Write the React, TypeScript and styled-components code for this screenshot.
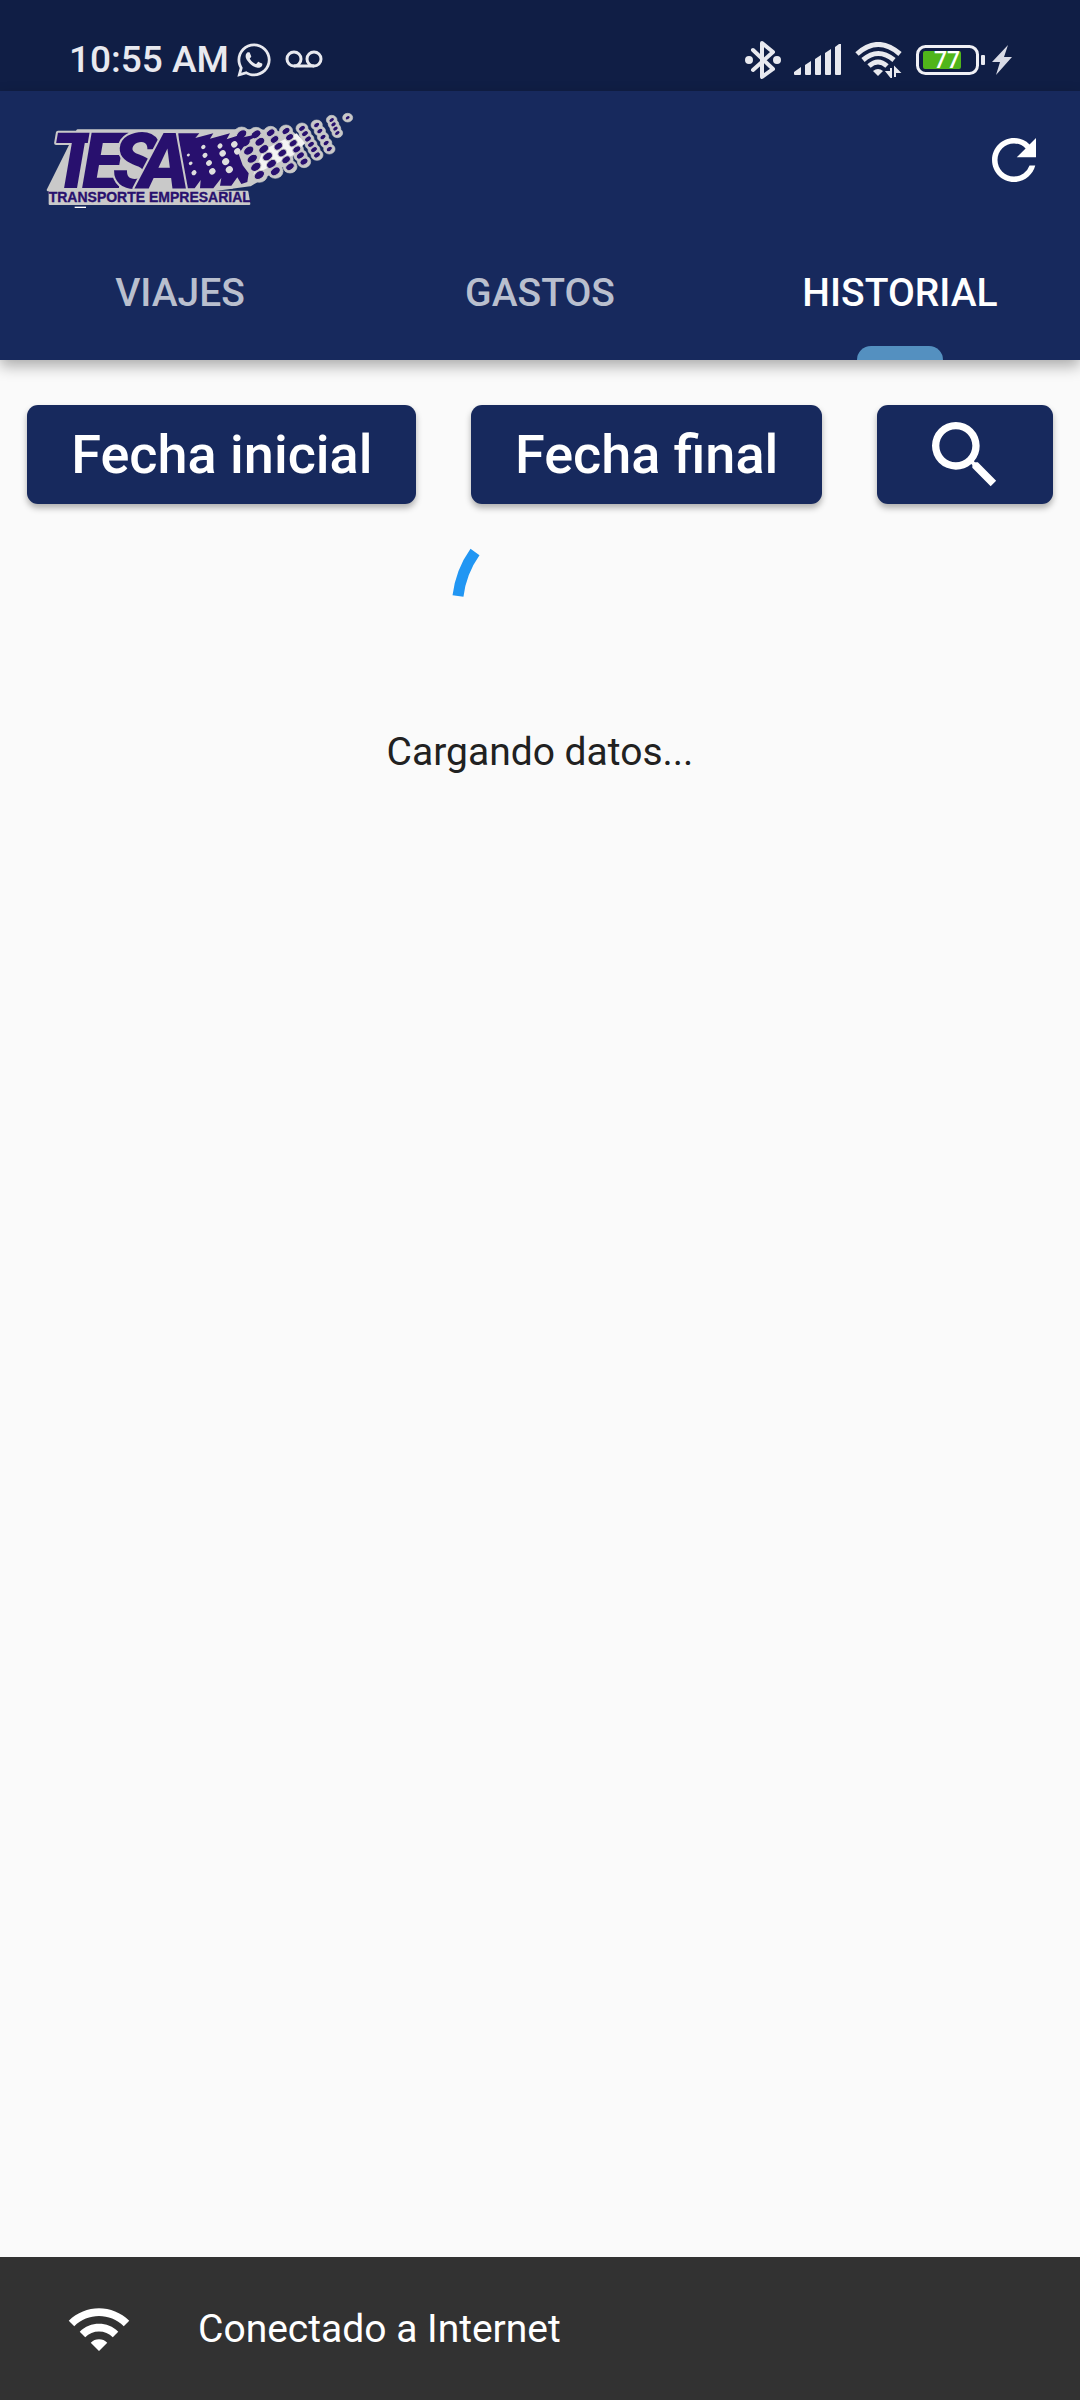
import React from 'react';
import styled, { createGlobalStyle } from 'styled-components';
import { MdRefresh, MdSearch, MdWifi } from 'react-icons/md';
import { FaWhatsapp } from 'react-icons/fa';

const navy = '#17295d';
const statusNavy = '#101e45';
const ink = '#28106e';
const silver = '#c9c9c9';

const GlobalStyle = createGlobalStyle`
  * { box-sizing: border-box; }
  body {
    margin: 0;
    background: #fafafa;
    font-family: Roboto, "Liberation Sans", sans-serif;
  }
  button { font-family: inherit; border: 0; padding: 0; cursor: pointer; }
  svg { display: block; flex: none; }
`;

const Screen = styled.div`
  min-height: 100vh;
  display: flex;
  flex-direction: column;
`;

const StatusBar = styled.div`
  height: 91px;
  padding: 28px 68px 0 69px;
  display: flex;
  align-items: center;
  justify-content: space-between;
  background: ${statusNavy};
  color: #e8e9ef;
`;

const StatusGroup = styled.div<{ $gap: number }>`
  display: flex;
  align-items: center;
  gap: ${(p) => p.$gap}px;
`;

const Clock = styled.span`
  font-size: 37px;
  line-height: 44px;
  font-weight: 500;
`;

const Header = styled.header`
  background: ${navy};
  box-shadow: 0 6px 14px rgba(0, 0, 0, 0.32);
`;

const Toolbar = styled.div`
  height: 137px;
  padding: 0 33px 0 44px;
  display: flex;
  align-items: center;
  justify-content: space-between;
`;

const IconButton = styled.button`
  display: flex;
  background: none;
  color: #fff;
`;

const Tabs = styled.div`
  display: grid;
  grid-template-columns: repeat(3, 1fr);
`;

const Tab = styled.button<{ $active: boolean }>`
  height: 132px;
  display: grid;
  grid-template-rows: 12px 1fr 14px;
  align-items: center;
  justify-items: center;
  background: none;
  color: ${(p) => (p.$active ? '#fff' : '#b9bfce')};
  font-size: 39px;
  line-height: 44px;
  font-weight: 500;

  &::before { content: ''; }

  &::after {
    content: '';
    width: 86px;
    height: 14px;
    border-radius: 14px 14px 0 0;
    background: ${(p) => (p.$active ? '#5490c0' : 'transparent')};
  }
`;

const Main = styled.main`
  flex: 1;
  display: flex;
  flex-direction: column;
  align-items: center;
`;

const Filters = styled.div`
  align-self: stretch;
  margin-top: 45px;
  display: flex;
  justify-content: space-around;
`;

const FilterButton = styled.button`
  height: 99px;
  padding: 0 44px;
  display: flex;
  align-items: center;
  border-radius: 11px;
  background: ${navy};
  color: #fff;
  font-size: 54px;
  line-height: 64px;
  font-weight: 500;
  box-shadow: 0 4px 6px rgba(0, 0, 0, 0.3);
`;

const Spinner = styled.svg`
  margin-top: 28px;
`;

const LoadingText = styled.p`
  margin: 22px 0 0;
  color: #212121;
  font-size: 39px;
  line-height: 44px;
`;

const Snackbar = styled.footer`
  height: 143px;
  padding: 0 66px;
  display: flex;
  align-items: center;
  gap: 66px;
  background: #323232;
  color: #fff;
  font-size: 39px;
  line-height: 44px;
`;

type Column = { from: [number, number]; to: [number, number]; count: number; r: number };

/* Halftone columns of the logo, in logo units (three per pixel). */
const columns: Column[] = [
  { from: [725, 403], to: [778, 525], count: 6, r: 17 },
  { from: [768, 403], to: [826, 514], count: 6, r: 16 },
  { from: [812, 398], to: [870, 500], count: 6, r: 14 },
  { from: [858, 393], to: [912, 485], count: 6, r: 13 },
  { from: [906, 385], to: [951, 465], count: 6, r: 11 },
  { from: [950, 375], to: [988, 447], count: 5, r: 10 },
  { from: [995, 360], to: [1012, 399], count: 4, r: 9 },
  { from: [1043, 353], to: [1043, 353], count: 1, r: 8 },
];

const dots = columns.flatMap(({ from, to, count, r }) =>
  Array.from({ length: count }, (_, i) => {
    const t = count === 1 ? 0 : i / (count - 1);
    return { x: from[0] + (to[0] - from[0]) * t, y: from[1] + (to[1] - from[1]) * t, r };
  }),
);

const holes: [number, number, number][] = [
  [610, 441, 7], [660, 438, 8], [703, 433, 10],
  [565, 465, 5], [615, 466, 8], [668, 460, 10], [712, 454, 10],
  [572, 490, 6], [627, 489, 9], [677, 485, 11],
  [582, 518, 8], [637, 514, 10], [688, 509, 11],
];

const bodyPath =
  'M535 400H598L586 414L640 400L630 416L690 400L680 418L735 400L730 412L785 400L742 424L716 462L728 496L746 520L742 546L724 552L712 532L694 557H660L664 534L640 565H600L602 540L584 565H535Z';

function Logo() {
  return (
    <svg width="310" height="98" viewBox="132 333 930 294" role="img" aria-label="TESA Transporte Empresarial">
      <g fill={silver} stroke={silver} strokeLinejoin="round">
        <path d="M233 392H560L780 392L860 400L910 420L860 490L750 555L640 570H144Z" strokeWidth="8" />
        <path d="M149 575H742L748 612H149Z" strokeWidth="6" />
        <path d={bodyPath} strokeWidth="18" />
        {dots.map((d, i) => (
          <ellipse key={i} cx={d.x} cy={d.y} rx={d.r + 7} ry={d.r + 5} strokeWidth="2" />
        ))}
      </g>
      <path d="M790 450L890 400L915 430L880 465L760 525Z" fill="#f4f4f4" />
      {dots.map((d, i) => (
        <ellipse
          key={i} cx={d.x} cy={d.y} rx={d.r} ry={d.r * 0.7} fill={ink} stroke={silver} strokeWidth="3"
          transform={`rotate(-35 ${d.x} ${d.y})`}
        />
      ))}
      <path d={bodyPath} fill={ink} />
      {holes.map(([x, y, r], i) => (
        <ellipse key={i} cx={x} cy={y} rx={r} ry={r - 1} fill="#dedede" transform={`rotate(-40 ${x} ${y})`} />
      ))}
      <text
        x="153 246 338 416" y="565" fill={ink} stroke={silver} strokeWidth="12" strokeLinejoin="round" paintOrder="stroke"
        fontFamily="Roboto, sans-serif" fontSize="232" fontWeight="900" fontStyle="italic"
      >
        TESA
      </text>
      <text
        x="146" y="607" fill={ink} stroke={ink} strokeWidth="1"
        fontFamily="'Liberation Sans', Arial, sans-serif" fontSize="42" fontWeight="700"
      >
        TRANSPORTE EMPRESARIAL
      </text>
      <path d="M224 622H258" stroke="#fff" strokeWidth="4" />
    </svg>
  );
}

function VoicemailIcon() {
  return (
    <svg width="38" height="20" viewBox="0 0 38 20" fill="none" stroke="currentColor" strokeWidth="3">
      <circle cx="9" cy="9" r="7" />
      <circle cx="29" cy="9" r="7" />
      <path d="M9 16H29" />
    </svg>
  );
}

function BluetoothIcon() {
  return (
    <svg width="36" height="40" viewBox="0 0 36 40" fill="none" stroke="currentColor" strokeWidth="4" strokeLinejoin="round" strokeLinecap="round">
      <path d="M8 10L28 29L17 37V3L28 12L8 30" />
      <circle cx="4" cy="20" r="2" />
      <circle cx="32" cy="20" r="2" />
    </svg>
  );
}

function SignalIcon() {
  return (
    <svg width="48" height="32" viewBox="0 0 48 32" fill="currentColor">
      <path d="M0 28L7 23V30Q7 31 6 31H1Q0 31 0 30ZM11 21L17 17V30Q17 31 16 31H12Q11 31 11 30ZM21 15L27 11V30Q27 31 26 31H22Q21 31 21 30ZM31 9L37 5V30Q37 31 36 31H32Q31 31 31 30ZM41 3L45 0H47V30Q47 31 46 31H42Q41 31 41 30Z" />
    </svg>
  );
}

function WifiStatusIcon() {
  return (
    <svg width="47" height="36" viewBox="0 0 47 36" fill="none" stroke="currentColor">
      <path d="M2 12Q23 -7 45 12M8 18Q23 5 39 18M14 24Q23 16 32 24" strokeWidth="5" />
      <path d="M18 29Q23 25 28 29L23 34Z" fill="currentColor" stroke="none" />
      <path d="M36 26V35L32 30H36ZM40 35V26L44 30H40Z" fill="currentColor" strokeWidth="2" />
    </svg>
  );
}

function BatteryIcon() {
  return (
    <svg width="70" height="30" viewBox="0 0 70 30">
      <rect x="1.5" y="1.5" width="60" height="27" rx="8" fill="none" stroke="#f0f0f5" strokeWidth="3" />
      <rect x="7" y="6" width="38" height="18" rx="2" fill="#50b51b" />
      <rect x="65" y="10" width="4" height="10" rx="1" fill="currentColor" />
      <text x="18" y="23" fill="#fff" fontFamily="Roboto, sans-serif" fontSize="23" fontWeight="500">77</text>
    </svg>
  );
}

function BoltIcon() {
  return (
    <svg width="20" height="30" viewBox="0 0 20 30" fill="#d9dbe6">
      <path d="M16 0L0 17H8L4 30L20 12H12Z" />
    </svg>
  );
}

const tabs = ['VIAJES', 'GASTOS', 'HISTORIAL'];

export default function App() {
  const [active, setActive] = React.useState('HISTORIAL');

  return (
    <Screen>
      <GlobalStyle />
      <StatusBar>
        <StatusGroup $gap={6}>
          <Clock>10:55 AM</Clock>
          <StatusGroup $gap={12}>
            <FaWhatsapp size={38} />
            <VoicemailIcon />
          </StatusGroup>
        </StatusGroup>
        <StatusGroup $gap={14}>
          <StatusGroup $gap={13}>
            <BluetoothIcon />
            <SignalIcon />
            <WifiStatusIcon />
          </StatusGroup>
          <StatusGroup $gap={6}>
            <BatteryIcon />
            <BoltIcon />
          </StatusGroup>
        </StatusGroup>
      </StatusBar>
      <Header>
        <Toolbar>
          <Logo />
          <IconButton type="button" aria-label="Actualizar">
            <MdRefresh size={66} />
          </IconButton>
        </Toolbar>
        <Tabs role="tablist">
          {tabs.map((name) => (
            <Tab
              key={name} type="button" role="tab" aria-selected={name === active}
              $active={name === active} onClick={() => setActive(name)}
            >
              {name}
            </Tab>
          ))}
        </Tabs>
      </Header>
      <Main>
        <Filters>
          <FilterButton type="button">Fecha inicial</FilterButton>
          <FilterButton type="button">Fecha final</FilterButton>
          <FilterButton type="button" aria-label="Buscar">
            <MdSearch size={88} />
          </FilterButton>
        </Filters>
        <Spinner width="176" height="176" viewBox="0 0 176 176" fill="none" stroke="#2196f3" strokeWidth="11">
          <path d="M6 64A96 96 0 0 1 23 20" />
        </Spinner>
        <LoadingText role="status">Cargando datos...</LoadingText>
      </Main>
      <Snackbar>
        <MdWifi size={66} />
        <span>Conectado a Internet</span>
      </Snackbar>
    </Screen>
  );
}
